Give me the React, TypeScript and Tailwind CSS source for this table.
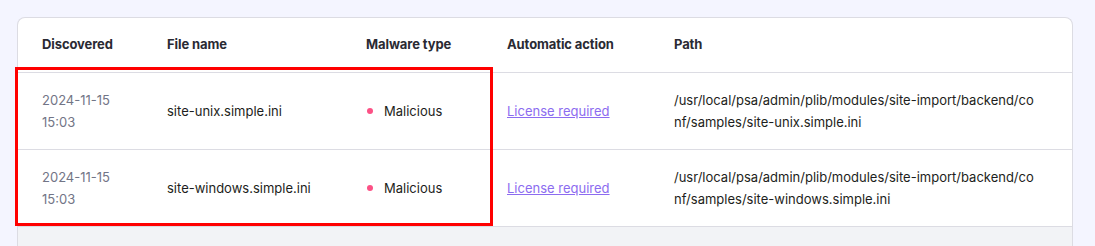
import React from "react";

const rows = [
  { file: "site-unix.simple.ini", path: "/usr/local/psa/admin/plib/modules/site-import/backend/conf/samples/site-unix.simple.ini" },
  { file: "site-windows.simple.ini", path: "/usr/local/psa/admin/plib/modules/site-import/backend/conf/samples/site-windows.simple.ini" },
];

const cols = "grid grid-cols-[125px_199px_141px_167px_1fr]";

export default function App() {
  return (
    <div className="min-h-[246px] bg-[#f4f5ff] pt-[17px] pl-[17px] pr-[22px]" style={{ fontFamily: "Inter, 'Noto Sans', sans-serif" }}>
      <div className="relative rounded-t-[8px] border border-b-0 border-[#dcdce3] bg-white">
        <div className={`${cols} h-[55px] items-center border-b border-[#dcdce3] text-[13px] font-bold tracking-[-0.1px] text-[#2a2a33]`}>
          <div className="pl-6">Discovered</div>
          <div className="pl-6">File name</div>
          <div className="pl-6">Malware type</div>
          <div className="pl-6">Automatic action</div>
          <div className="pl-6">Path</div>
        </div>
        {rows.map((r) => (
          <div key={r.file} className={`${cols} h-[77px] items-center border-b border-[#dcdce3] text-[13px] leading-[22px] text-[#1d1e20]`}>
            <div className="pl-6 pr-6 text-[#727586]">2024-11-15 15:03</div>
            <div className="pl-6">{r.file}</div>
            <div className="pl-6 flex items-center">
              <span className="ml-[1px] mr-[11px] h-[6px] w-[6px] rounded-full bg-[#fc5185]" />
              <span>Malicious</span>
            </div>
            <div className="pl-6">
              <a href="#" className="text-[#8c6cf0] underline">License required</a>
            </div>
            <div className="pl-6 pr-[35px] break-all">{r.path}</div>
          </div>
        ))}
        <div className="h-[20px] bg-[#f2f3f6]" />
        <div className="pointer-events-none absolute left-[-3px] top-[49px] h-[159px] w-[478px] border-[3px] border-[#ff0000]" />
      </div>
    </div>
  );
}
